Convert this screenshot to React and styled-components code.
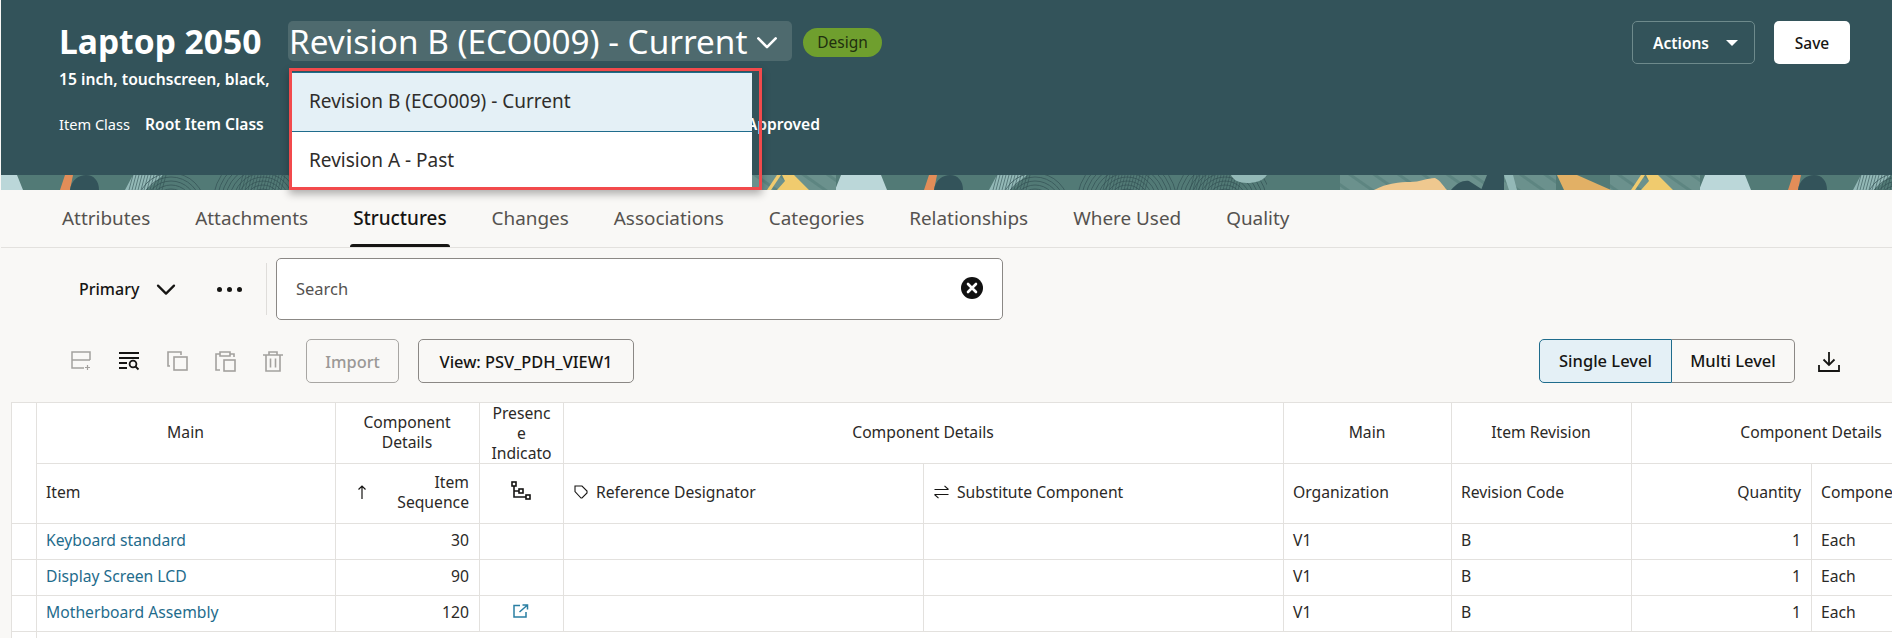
import React from "react";
import styled, { createGlobalStyle } from "styled-components";

const Global = createGlobalStyle`
  html, body { margin: 0; padding: 0; background: #fff; }
  body { font-family: "Noto Sans", "Open Sans", sans-serif; color: #161513; }
  * { box-sizing: border-box; }
`;

const Page = styled.div`
  width: 1892px; height: 638px; overflow: hidden; padding-left: 1px; background: #f9f8f6;
`;
const Header = styled.header`
  height: 175px; background: #33535a; padding: 21px 42px 0 58px; color: #fff; position: relative;
`;
const TopRow = styled.div`
  display: flex; align-items: center; height: 43px;
`;
const Title = styled.h1`
  margin: 0 28px 0 0; padding-bottom: 3px; font-size: 33.6px; font-weight: 700; line-height: 40px; width: 201px; white-space: nowrap;
`;
const SelectWrap = styled.div`
  position: relative; align-self: flex-start;
`;
const Select = styled.div`
  display: flex; align-items: center; width: 504px; height: 40px;
  padding: 0 0 1px 1px; background: #4e6a6e; border-radius: 5px; font-size: 33.3px; white-space: nowrap;
  svg { margin-left: 7px; margin-top: 3px; }
`;
const Menu = styled.ul`
  position: absolute; left: 4px; top: 51px; width: 460px; margin: 0; padding: 0; list-style: none;
  background: #fff; border-top: 1px solid #1f6c8c; z-index: 3; font-size: 19px;
`;
const MenuItem = styled.li`
  display: flex; align-items: center; padding: 0 0 2px 17px; color: #2f2d2b;
  height: ${(p) => (p.$active ? "59px" : "57px")};
  background: ${(p) => (p.$active ? "#e4f0f6" : "#fff")};
  border-bottom: ${(p) => (p.$active ? "1px solid #1f6c8c" : "none")};
`;
const Annotation = styled.div`
  position: absolute; left: 1px; top: 47px; width: 473px; height: 122px;
  border: 3px solid #f24a4c; z-index: 4; pointer-events: none;
  box-shadow: 0 4px 8px rgba(0, 0, 0, 0.3);
`;
const Badge = styled.span`
  display: inline-flex; align-items: center; justify-content: center; width: 79px; height: 29px;
  margin-left: 11px; padding-bottom: 1px; border-radius: 15px; background: #6f9f2e; color: #21300f; font-size: 15.5px;
`;
const Actions = styled.div`
  margin-left: auto; display: flex; gap: 19px;
`;
const OutlineBtn = styled.button`
  display: flex; align-items: center; justify-content: space-between; width: 123px; height: 43px;
  padding: 0 16px 0 20px; background: transparent; color: #fff; border: 1px solid #6e8a8c; border-radius: 5px;
  font: 600 15.5px "Noto Sans", sans-serif;
`;
const SaveBtn = styled.button`
  width: 76px; height: 43px; background: #fff; color: #161513; border: none; border-radius: 5px;
  font: 500 15.5px "Noto Sans", sans-serif;
`;
const Caret = styled.span`
  width: 0; height: 0; border-left: 6px solid transparent; border-right: 6px solid transparent;
  border-top: 6px solid #fff;
`;
const Subtitle = styled.div`
  margin-top: 5px; font-size: 15.7px; font-weight: 600; line-height: 20px; white-space: nowrap;
`;
const Meta = styled.div`
  display: flex; margin-top: 25px; font-size: 14.6px; line-height: 20px; white-space: nowrap;
`;
const MetaStrong = styled.span`
  font-weight: 600; font-size: 15.6px; margin-left: 15px;
`;
const MetaTail = styled.span`
  font-weight: 600; font-size: 15.6px; margin-left: 483px;
`;

const Band = styled.svg`
  display: block; width: 100%; height: 15px;
`;

const Tabs = styled.nav`
  display: flex; gap: 41px; height: 58px; padding-left: 59px; background: #f9f8f6; border-bottom: 1px solid #e3e1de;
`;
const Tab = styled.a`
  position: relative; display: flex; align-items: center; padding: 0 2px 2px; height: 57px; font-size: 18.9px;
  color: ${(p) => (p.$active ? "#161513" : "#55524f")}; font-weight: ${(p) => (p.$active ? 500 : 400)};
  &::after {
    content: ""; display: ${(p) => (p.$active ? "block" : "none")}; position: absolute; left: -1px; right: -1px; bottom: 0;
    height: 3px; background: #161513; border-radius: 3px 3px 0 0;
  }
`;

const Body = styled.main`
  background: #f9f8f6; height: 154px;
`;
const SearchRow = styled.div`
  display: flex; align-items: center; height: 72px; padding: 10px 0 0 78px;
`;
const Primary = styled.div`
  display: flex; align-items: center; font-size: 16px; font-weight: 500; width: 138px;
  svg { margin-left: 15px; }
`;
const Dots = styled.div`
  display: flex; gap: 5px; width: 49px;
  span { width: 5px; height: 5px; border-radius: 50%; background: #161513; }
`;
const Divider = styled.div`
  width: 1px; height: 52px; background: #dfddda; margin-right: 9px;
`;
const SearchBox = styled.div`
  display: flex; align-items: center; justify-content: space-between; width: 727px; height: 62px;
  padding: 0 19px 2px 19px; background: #fff; border: 1px solid #8b8885; border-radius: 5px;
  font-size: 16.5px; color: #55524f;
`;
const ActionRow = styled.div`
  display: flex; align-items: center; height: 44px; margin-top: 19px; padding-left: 56px; padding-right: 52px;
`;
const IconBtn = styled.span`
  display: flex; align-items: center; justify-content: center; width: 48px; height: 44px;
  color: ${(p) => (p.$on ? "#161513" : "#a3a19e")};
`;
const Btn = styled.button`
  height: 44px; padding: 0; background: transparent; border-radius: 5px; font: 500 16.4px "Noto Sans", sans-serif;
  border: 1px solid ${(p) => (p.$disabled ? "#a8a6a3" : "#8b8885")};
  color: ${(p) => (p.$disabled ? "#9b9996" : "#161513")};
  margin-left: ${(p) => p.$ml || 0}px;
  width: ${(p) => p.$w}px;
`;
const Segmented = styled.div`
  display: flex; margin-left: auto; height: 44px; font-size: 16.5px; font-weight: 500;
`;
const Seg = styled.div`
  display: flex; align-items: center; justify-content: center; width: ${(p) => p.$w}px; padding-bottom: 1px;
  ${(p) =>
    p.$on
      ? "background:#e4f0f6;border:1px solid #1f6c8c;border-radius:5px 0 0 5px;"
      : "border:1px solid #8b8885;border-left:none;border-radius:0 5px 5px 0;"}
`;
const Download = styled.span`
  display: flex; margin-left: 23px; width: 22px;
`;

const TableWrap = styled.div`
  margin-left: 10px; width: 1881px; overflow: hidden;
`;
const Table = styled.table`
  table-layout: fixed; width: 1981px; border-collapse: separate; border-spacing: 0; background: #fff;
  border-top: 1px solid #e3e1de; border-left: 1px solid #e3e1de; font-size: 15.7px; color: #2b2927;
`;
const Th = styled.th`
  height: 60px; padding: 0 10px 3px 9px; font-weight: 400; line-height: 20px; vertical-align: middle;
  text-align: ${(p) => p.$align || "left"}; border-right: 1px solid #e3e1de; border-bottom: 1px solid #e3e1de;
  overflow: hidden; white-space: ${(p) => (p.$wrap ? "normal" : "nowrap")};
`;
const NarrowTh = styled(Th)`
  padding: 0 9px; overflow-wrap: anywhere; text-align: center;
`;
const Clamp = styled.div`
  max-height: 60px; overflow: hidden;
`;
const SeqHead = styled.div`
  display: flex; align-items: center; justify-content: space-between; text-align: right; padding-left: 12px;
`;
const IconLabel = styled.div`
  display: flex; align-items: center; gap: 8px; padding-left: 1px;
`;
const Td = styled.td`
  height: 36px; padding: 0 10px 4px 9px; white-space: nowrap; overflow: hidden;
  text-align: ${(p) => p.$align || "left"}; border-right: 1px solid #e3e1de; border-bottom: 1px solid #e3e1de;
`;
const LinkText = styled.a`
  color: #1f6c8c;
`;
const FillerCell = styled.td`
  height: 12px; border-right: ${(p) => (p.$line ? "1px solid #e3e1de" : "none")};
`;

const Fingerprint = ({ cx, cy, from = 6, to = 50, step = 4 }) => {
  const rs = [];
  for (let r = from; r <= to; r += step) rs.push(r);
  return (
    <g fill="none" stroke="#2f4d50" strokeWidth="0.9" opacity="0.75">
      {rs.map((r) => (
        <circle key={r} cx={cx} cy={cy} r={r} />
      ))}
    </g>
  );
};

const Hatch = ({ x, w, color = "#2f4d50" }) => {
  const ls = [];
  for (let i = 0; i < w; i += 3) ls.push(x + i);
  return (
    <g stroke={color} strokeWidth="0.8" opacity="0.75">
      {ls.map((v) => (
        <line key={v} x1={v + 4} y1="0" x2={v} y2="15" />
      ))}
    </g>
  );
};

const BandPattern = () => (
  <Band viewBox="0 0 1891 15" preserveAspectRatio="none" aria-hidden="true">
    <defs>
      <pattern id="stripes" width="14" height="14" patternUnits="userSpaceOnUse" patternTransform="rotate(35)">
        <rect width="14" height="14" fill="#6b918d" />
        <rect width="14" height="3" fill="#5d8581" />
      </pattern>
      <clipPath id="fp1"><rect x="205" y="0" width="210" height="15" /></clipPath>
      <pattern id="tile" width="864" height="15" patternUnits="userSpaceOnUse" x="0">
        <rect width="864" height="15" fill="#527a76" />
        <polygon points="-1,0 16,0 22,15 -1,15" fill="#bbd7d9" />
        <polygon points="834,15 840,0 868,0 868,15" fill="#bbd7d9" />
        <polygon points="124,15 132,0 162,0 145,15" fill="#93b9b7" />
        <polygon points="64,0 72,0 69,15 59,15" fill="#e28d58" />
        <path d="M69 15 C70 5 78 0 85 0 C93 0 98 6 98 15 Z" fill="#33535a" />
        <rect x="380" width="26" height="15" fill="#527a76" />
        <Hatch x={128} w={36} />
        <Hatch x={238} w={44} />
        <Hatch x={325} w={50} />
        <g clipPath="url(#fp1)">
          <Fingerprint cx={262} cy={28} from={10} to={52} step={4} />
          <Fingerprint cx={360} cy={28} from={10} to={52} step={4} />
        </g>
        <Fingerprint cx={170} cy={32} from={18} to={34} step={4} />
        <path d="M366 0 H402 C398 6 390 8 382 8 C374 8 368 5 366 0Z" fill="#93b9b7" />
        <rect x="402" width="100" height="15" fill="#527a76" />
        <rect x="475" width="216" height="15" fill="url(#stripes)" />
        <rect x="745" width="90" height="15" fill="url(#stripes)" />
        <path d="M509 15 C522 8 535 7 545 7 C555 7 562 3 570 3 C576 6 578 11 582 15 Z" fill="#efc88f" />
        <path d="M586 15 C592 8 598 5 604 6 L618 15 Z" fill="#33535a" />
        <polygon points="622,0 639,0 639,15 616,15" fill="#33535a" />
        <polygon points="639,0 648,0 652,15 644,15" fill="#93b9b7" />
        <polygon points="692,0 712,0 746,15 699,15" fill="#e2b065" />
        <polygon points="766,15 776,0 780,0 770,15" fill="#f0cb6e" />
        <polygon points="781,0 793,0 808,15 776,15 784,6" fill="#f0cb6e" />
      </pattern>
    </defs>
    <rect width="1891" height="15" fill="url(#tile)" />
  </Band>
);

const Chevron = ({ size = 18, sw = 2, color = "currentColor" }) => (
  <svg width={size} height={size} viewBox="0 0 18 18" fill="none" stroke={color} strokeWidth={sw} strokeLinecap="round" strokeLinejoin="round">
    <path d="M3 6.5 L9 12.5 L15 6.5" />
  </svg>
);

const AddRowIcon = () => (
  <svg width="20" height="20" viewBox="0 0 20 20" fill="none" stroke="currentColor" strokeWidth="1.5">
    <path d="M1 9 H19 M19 9 V1 H1 V17 H13" />
    <path d="M16.5 14 V19 M14 16.5 H19" strokeWidth="1.2" />
  </svg>
);
const ListSearchIcon = () => (
  <svg width="22" height="20" viewBox="0 0 22 20" fill="none" stroke="currentColor" strokeWidth="1.8">
    <path d="M1 2 H21 M1 7 H21 M1 12 H9 M1 17 H9" />
    <circle cx="15" cy="13" r="3.4" />
    <path d="M17.5 15.5 L20.5 18.5" />
  </svg>
);
const CopyIcon = () => (
  <svg width="21" height="20" viewBox="0 0 21 20" fill="none" stroke="currentColor" strokeWidth="1.6">
    <path d="M3 15 H1 V1 H14 V4" />
    <rect x="7" y="6" width="13" height="13" />
  </svg>
);
const PasteIcon = () => (
  <svg width="21" height="21" viewBox="0 0 21 21" fill="none" stroke="currentColor" strokeWidth="1.6">
    <path d="M5 19 H1 V3 H5 M15 3 H19 V6" />
    <path d="M5 5 V1 H15 V5 Z" />
    <rect x="9" y="9" width="11" height="11" />
  </svg>
);
const TrashIcon = () => (
  <svg width="20" height="21" viewBox="0 0 20 21" fill="none" stroke="currentColor" strokeWidth="1.6">
    <path d="M0 4 H20 M6 4 V1 H14 V4 M3 4 V20 H17 V4 M7.5 7.5 V16.5 M12.5 7.5 V16.5" />
  </svg>
);
const DownloadIcon = () => (
  <svg width="22" height="21" viewBox="0 0 22 21" fill="none" stroke="#161513" strokeWidth="1.8">
    <path d="M11 1 V14 M5.5 8.5 L11 14 L16.5 8.5" />
    <path d="M1 14 V20 H21 V14" />
  </svg>
);
const ClearIcon = () => (
  <svg width="22" height="22" viewBox="0 0 22 22">
    <circle cx="11" cy="11" r="11" fill="#111" />
    <path d="M7 7 L15 15 M15 7 L7 15" stroke="#fff" strokeWidth="2.6" strokeLinecap="round" />
  </svg>
);
const ArrowUp = () => (
  <svg width="10" height="14" viewBox="0 0 10 14" fill="none" stroke="#161513" strokeWidth="1.2">
    <path d="M5 14 V1 M1.5 4.5 L5 1 L8.5 4.5" />
  </svg>
);
const HierarchyIcon = () => (
  <svg width="20" height="19" viewBox="0 0 20 19" fill="none" stroke="#161513" strokeWidth="1.6">
    <rect x="1" y="1" width="4" height="4" />
    <rect x="8" y="8" width="4" height="4" />
    <rect x="15" y="14" width="4" height="4" />
    <path d="M3 5 V16 H15 M3 10 H8" />
  </svg>
);
const TagIcon = () => (
  <svg width="14" height="14" viewBox="0 0 14 14" fill="none" stroke="#161513" strokeWidth="1.1">
    <path d="M1 1 H8 L13 6 V8 L8 13 H7 L1 6.5 Z" />
  </svg>
);
const SwapIcon = () => (
  <svg width="15" height="14" viewBox="0 0 15 14" fill="none" stroke="#161513" strokeWidth="1.1">
    <path d="M0.5 4.5 H14.5 M10.5 0.8 L14.5 4.5 M14.5 9.5 H0.5 M4.5 13.2 L0.5 9.5" />
  </svg>
);
const ExternalIcon = () => (
  <svg width="16" height="14" viewBox="0 0 16 14" fill="none" stroke="#2a7fa3" strokeWidth="1.5">
    <path d="M7 1.5 H1 V13 H13 V8" />
    <path d="M6.5 8 L14.5 1 M9.5 1 H14.5 V5.5" />
  </svg>
);

const tabNames = ["Attributes", "Attachments", "Structures", "Changes", "Associations", "Categories", "Relationships", "Where Used", "Quality"];
const rows = [
  { item: "Keyboard standard", seq: 30 },
  { item: "Display Screen LCD", seq: 90 },
  { item: "Motherboard Assembly", seq: 120, ext: true },
];
const widths = [25, 299, 144, 84, 360, 360, 168, 180, 180, 180];

export default function App() {
  return (
    <Page>
      <Global />
      <Header>
        <TopRow>
          <Title>Laptop 2050</Title>
          <SelectWrap>
            <Select>
              Revision B (ECO009) - Current
              <Chevron size={26} sw={1.8} />
            </Select>
            <Menu>
              <MenuItem $active>Revision B (ECO009) - Current</MenuItem>
              <MenuItem>Revision A - Past</MenuItem>
            </Menu>
            <Annotation />
          </SelectWrap>
          <Badge>Design</Badge>
          <Actions>
            <OutlineBtn>
              Actions
              <Caret />
            </OutlineBtn>
            <SaveBtn>Save</SaveBtn>
          </Actions>
        </TopRow>
        <Subtitle>15 inch, touchscreen, black,</Subtitle>
        <Meta>
          <span>Item Class</span>
          <MetaStrong>Root Item Class</MetaStrong>
          <MetaTail>Approved</MetaTail>
        </Meta>
      </Header>
      <BandPattern />
      <Tabs>
        {tabNames.map((t) => (
          <Tab key={t} $active={t === "Structures"}>{t}</Tab>
        ))}
      </Tabs>
      <Body>
        <SearchRow>
          <Primary>
            Primary
            <Chevron size={24} sw={1.7} />
          </Primary>
          <Dots><span /><span /><span /></Dots>
          <Divider />
          <SearchBox>
            Search
            <ClearIcon />
          </SearchBox>
        </SearchRow>
        <ActionRow>
          <IconBtn><AddRowIcon /></IconBtn>
          <IconBtn $on><ListSearchIcon /></IconBtn>
          <IconBtn><CopyIcon /></IconBtn>
          <IconBtn><PasteIcon /></IconBtn>
          <IconBtn><TrashIcon /></IconBtn>
          <Btn $disabled $ml={9} $w={93}>Import</Btn>
          <Btn $ml={19} $w={216}>View: PSV_PDH_VIEW1</Btn>
          <Segmented>
            <Seg $on $w={133}>Single Level</Seg>
            <Seg $w={123}>Multi Level</Seg>
          </Segmented>
          <Download><DownloadIcon /></Download>
        </ActionRow>
      </Body>
      <TableWrap>
        <Table>
          <colgroup>
            {widths.map((w, i) => (
              <col key={i} style={{ width: w }} />
            ))}
          </colgroup>
          <thead>
            <tr>
              <Th rowSpan={2} />
              <Th $align="center">Main</Th>
              <Th $align="center" $wrap>Component Details</Th>
              <NarrowTh $wrap><Clamp>Presence Indicator</Clamp></NarrowTh>
              <Th $align="center" colSpan={2}>Component Details</Th>
              <Th $align="center">Main</Th>
              <Th $align="center">Item Revision</Th>
              <Th $align="center" colSpan={2}>Component Details</Th>
            </tr>
            <tr>
              <Th>Item</Th>
              <Th $wrap>
                <SeqHead>
                  <ArrowUp />
                  <span>Item<br />Sequence</span>
                </SeqHead>
              </Th>
              <Th $align="center"><HierarchyIcon /></Th>
              <Th><IconLabel><TagIcon />Reference Designator</IconLabel></Th>
              <Th><IconLabel><SwapIcon />Substitute Component</IconLabel></Th>
              <Th>Organization</Th>
              <Th>Revision Code</Th>
              <Th $align="right">Quantity</Th>
              <Th>Component UOM</Th>
            </tr>
          </thead>
          <tbody>
            {rows.map((r) => (
              <tr key={r.item}>
                <Td />
                <Td><LinkText>{r.item}</LinkText></Td>
                <Td $align="right">{r.seq}</Td>
                <Td $align="center">{r.ext && <ExternalIcon />}</Td>
                <Td />
                <Td />
                <Td>V1</Td>
                <Td>B</Td>
                <Td $align="right">1</Td>
                <Td>Each</Td>
              </tr>
            ))}
            <tr>
              <FillerCell $line />
              <FillerCell colSpan={9} />
            </tr>
          </tbody>
        </Table>
      </TableWrap>
    </Page>
  );
}
